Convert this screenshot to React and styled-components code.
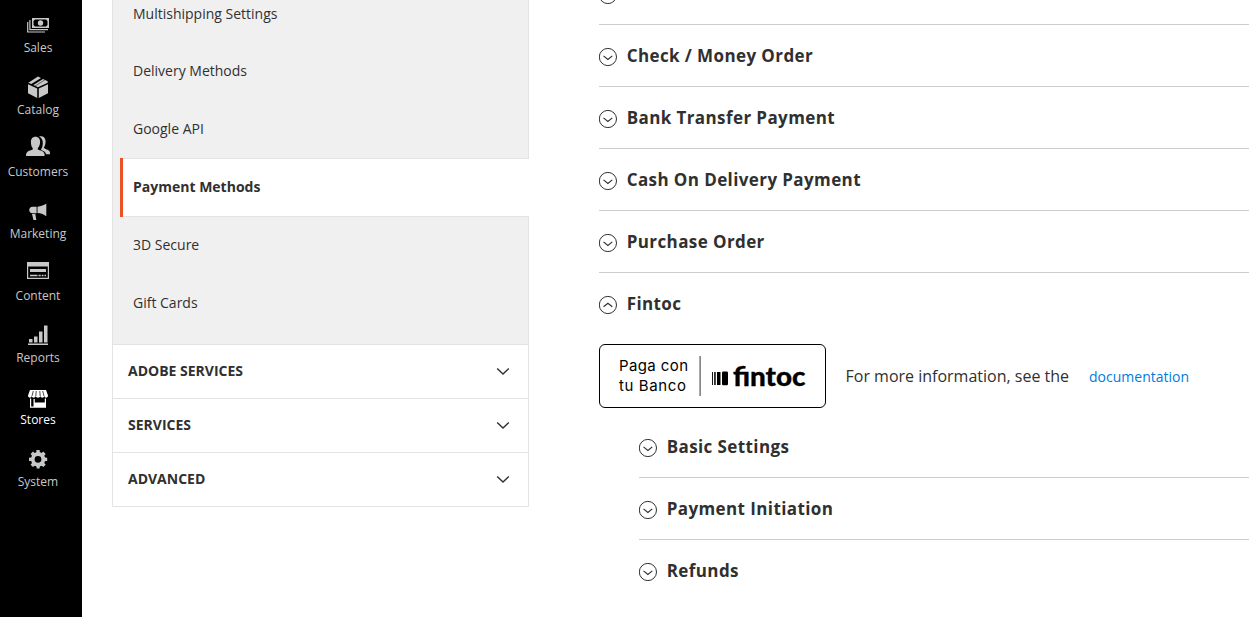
import React from 'react';
import styled, { createGlobalStyle } from 'styled-components';

const GlobalStyle = createGlobalStyle`
  * { box-sizing: border-box; }
  html, body { margin: 0; height: 100%; overflow: hidden; background: #fff; }
  body { font-family: 'Open Sans', 'Noto Sans', sans-serif; color: #303030; font-size: 14px; }
`;

const Page = styled.div`
  display: flex;
  height: 617px;
  overflow: hidden;
`;

const Sidebar = styled.nav`
  flex: 0 0 82px;
  background: #000;
  padding: 11px 6px 0 0;
`;

const MenuItem = styled.a`
  display: flex;
  flex-direction: column;
  align-items: center;
  height: 62px;
  color: ${(p) => (p.$active ? '#fff' : '#c8c8c8')};
  font-size: 12px;
  line-height: 18px;
  svg { display: block; flex: none; }
`;

const ConfigColumn = styled.aside`
  flex: 0 0 417px;
  margin-left: 30px;
`;

const SubNav = styled.ul`
  list-style: none;
  margin: 0;
  padding: 0 0 12px;
  height: 345px;
  display: flex;
  flex-direction: column;
  justify-content: flex-end;
  background: #f0f0f0;
  border: solid #e3e3e3;
  border-width: 0 1px 1px;
`;

const SubNavItem = styled.li`
  flex: none;
  height: ${(p) => (p.$active ? 59 : 58)}px;
  line-height: 20px;
  padding: ${(p) => (p.$active ? '19px 10px' : '19px 20px')};
  &:first-child { padding-top: 20px; }
  ${(p) => p.$active && `
    margin: 0 -1px -1px 7px;
    background: #fff;
    border-left: 3px solid #eb5224;
    box-shadow: inset 0 1px #e3e3e3, inset 0 -1px #e3e3e3;
    font-weight: 700;
  `}
`;

const Section = styled.div`
  display: flex;
  align-items: center;
  justify-content: space-between;
  height: 54px;
  padding: 0 18px 2px 15px;
  border: solid #e3e3e3;
  border-width: 0 1px 1px;
  font-weight: 700;
  text-transform: uppercase;
  svg { margin-top: 1px; }
`;

const Content = styled.main`
  flex: 1;
  min-width: 0;
  margin-left: 70px;
`;

const Group = styled.div`
  display: flex;
  align-items: flex-start;
  height: 62px;
  padding-top: 18px;
  border-bottom: 1px solid ${(p) => (p.$plain ? 'transparent' : '#ccc')};
  &:first-child { height: 25px; padding: 0; align-items: flex-start; }
  &:first-child svg { margin-top: -15px; }
  svg { flex: none; margin: 4px 8.7px 0 0; }
`;

const GroupTitle = styled.h2`
  margin: 1px 0 0;
  font-size: 17px;
  line-height: 24px;
  font-weight: 700;
  letter-spacing: 0.4px;
  white-space: nowrap;
`;

const Nested = styled.div`
  margin-left: 40px;
  padding-top: 8px;
  & > div:first-child { height: 62px; padding-top: 18px; }
  & > div:first-child svg { margin-top: 4px; }
`;

const Notice = styled.div`
  display: flex;
  align-items: center;
  height: 64px;
  margin-top: 9px;
  font-size: 16px;
  white-space: nowrap;
`;

const Banner = styled.div`
  display: flex;
  align-items: center;
  flex: 0 0 226.5px;
  height: 64px;
  margin-right: 20px;
  border: 1px solid #000;
  border-radius: 6px;
  svg { display: block; }
`;

const DocLink = styled.a`
  margin-left: 20px;
  color: #007bdb;
  font-size: 14px;
`;

const icons = {
  Sales: (
    <>
      <path fillRule="evenodd" d="M8 7h17v10H8zM11 8.500 9.500 10v4L11 15.500h11l1.500-1.500v-4L22 8.500z" />
      <circle cx="16.500" cy="12" r="2.700" />
      <path d="M5.900 9v9.600H24M3.700 11v10H21" fill="none" stroke="currentColor" strokeWidth="1.200" />
    </>
  ),
  Catalog: (
    <>
      <path d="M4 11.300 13.200 15.600V25L4 20.200zM24 11.300 14.800 15.600V25L24 20.200z" />
      <path d="M4.300 9.700 14 3.600l3 1.300-9.700 6.200zM9.400 12 19 5.900l4.700 2.400v1.400L14 14.300z" />
      <path d="m11 13.200 10-6.500" stroke="#000" strokeWidth=".5" />
    </>
  ),
  Customers: (
    <>
      <path d="M11.500 1.800c3 0 4.600 2.200 4.600 5.200 0 2.600-.9 4.800-2.300 6.100v1.500c2.500 1 5.500 1.500 6.400 3.400.4.900.4 2 .4 3H2c0-1 0-2.100.5-3 .9-1.900 3.900-2.400 6.200-3.400v-1.500C7.400 11.800 6.900 9.600 6.900 7c0-3 1.600-5.200 4.600-5.200z" />
      <path d="M15 1.500c4-1.300 6.600 1.200 6.600 5 0 2.600-.8 4.700-1.800 6 .6 1.800 5.100 2 5.900 4.100.3.900.3 1.700.3 2.700h-3.800c-.8-2.500-2.500-3.100-5.300-4.500 1.200-1.900 1.900-4.300 1.900-7.100 0-2.700-1.300-5-3.800-6.200z" />
    </>
  ),
  Marketing: (
    <path d="M22.300 6.600v12.600c-2.500-1.700-5-2.800-8.800-3.100V9.700c3.800-.3 6.300-1.400 8.800-3.100zM12.600 9.700v6.500H8.500c-4.300 0-4.300-6.500 0-6.500zM8 17h3.300l1 6H9.500z" />
  ),
  Content: (
    <>
      <path fillRule="evenodd" d="M3 3h22v17H3zM4.200 7.500v11.300h19.600V7.500z" />
      <path d="M6 10h16v3H6zM6 15.700h7.500v1.600H6zM14.500 15.700h2.200v1.600h-2.200zM17.700 15.700h1.800v1.600h-1.800zM20.500 15.700H22v1.600h-1.500z" />
    </>
  ),
  Reports: (
    <path d="M4 22.500h20V24H4zM5 18h3.500v3.500H5zM10 15.500h3.500v6H10zM15 10.500h3.500v11H15zM20 4.500h3.500v17H20z" />
  ),
  Stores: (
    <>
      <path d="M6 7h16l2 5.500c0 2.600-3.300 2.900-3.700.5-.5 2.200-3.500 2.200-4 0-.5 2.200-4.100 2.200-4.600 0-.5 2.200-3.500 2.200-4 0C7.300 15.400 4 15.100 4 12.500z" />
      <path d="M9.300 8 8 13M12.200 8l-.4 5M15.800 8l.4 5M18.700 8 20 13" stroke="#000" strokeWidth=".7" />
      <path fillRule="evenodd" d="M6 15.500h1.200V23.500H9.500v-7.500h1.300v3.500h10v-4H22V24.700H6z" />
    </>
  ),
  System: (
    <path fillRule="evenodd" d="m12.300 5 .2 2.100-1.800.8-1.700-1.400L6.600 8.900 8 10.700l-.8 1.800-2.200.2v3.200l2.200.2L8 18l-1.400 1.800L9 22.100l1.700-1.400 1.800.8.200 2.100h2.900l.2-2.100 1.800-.8 1.700 1.400 2.400-2.300L20.300 18l.8-1.900 2.100-.2v-3.200l-2.100-.2-.8-1.800 1.400-1.800-2.400-2.400-1.700 1.400-1.800-.8-.2-2.100zM14 10.900a3.400 3.400 0 1 1 0 6.800 3.400 3.400 0 0 1 0-6.800z" />
  ),
};

const MenuIcon = ({ name }) => (
  <svg width="28" height="28" viewBox="0 0 28 28" fill="currentColor">{icons[name]}</svg>
);

const Chevron = () => (
  <svg width="14" height="9" viewBox="0 0 14 9" fill="none" stroke="#303030" strokeWidth="1.400">
    <path d="m1.200 1.500 5.800 5.600 5.800-5.600" />
  </svg>
);

const Toggle = ({ open }) => (
  <svg width="19" height="20" viewBox="0 0 19 20" fill="none" stroke="#303030" strokeWidth="1">
    <circle cx="8.900" cy="10" r="8.600" />
    <path strokeWidth="1.200" d={open ? 'm4.500 11.700 4.400-3.500 4.400 3.500' : 'm4.500 8.900 4.400 3.500 4.400-3.500'} />
  </svg>
);

const FintocLogo = () => (
  <svg width="224" height="62" viewBox="0 0 224 62" fill="#000">
    <g fontFamily="Inter, sans-serif" fontSize="15">
      <text x="19" y="26" textLength="69">Paga con</text>
      <text x="19" y="46" textLength="67">tu Banco</text>
    </g>
    <path fill="#555" d="M99.500 11h1.200v40h-1.200z" />
    <path d="M112 27h.9v13H112zM114.200 27h1.500v13h-1.500zM117 27h3.500v13H117z" />
    <rect x="122" y="26.600" width="6" height="13.600" rx="1.300" />
    <text x="133" y="40.500" fontFamily="Lato, sans-serif" fontWeight="900" fontSize="26.500" textLength="72.500" lengthAdjust="spacingAndGlyphs" stroke="#000" strokeWidth=".3">fintoc</text>
  </svg>
);

const GroupRow = ({ title, open, plain }) => (
  <Group $plain={plain}>
    <Toggle open={open} />
    {title && <GroupTitle>{title}</GroupTitle>}
  </Group>
);

const links = ['Multishipping Settings', 'Delivery Methods', 'Google API', 'Payment Methods', '3D Secure', 'Gift Cards'];

export default function App() {
  return (
    <Page>
      <GlobalStyle />
      <Sidebar>
        {Object.keys(icons).map((name) => (
          <MenuItem key={name} $active={name === 'Stores'}>
            <MenuIcon name={name} />
            {name}
          </MenuItem>
        ))}
      </Sidebar>
      <ConfigColumn>
        <SubNav>
          {links.map((l) => <SubNavItem key={l} $active={l === 'Payment Methods'}>{l}</SubNavItem>)}
        </SubNav>
        {['Adobe Services', 'Services', 'Advanced'].map((s) => (
          <Section key={s}>{s}<Chevron /></Section>
        ))}
      </ConfigColumn>
      <Content>
        <GroupRow />
        <GroupRow title="Check / Money Order" />
        <GroupRow title="Bank Transfer Payment" />
        <GroupRow title="Cash On Delivery Payment" />
        <GroupRow title="Purchase Order" />
        <GroupRow title="Fintoc" open plain />
        <Notice>
          <Banner><FintocLogo /></Banner>
          For more information, see the
          <DocLink>documentation</DocLink>
        </Notice>
        <Nested>
          <GroupRow title="Basic Settings" />
          <GroupRow title="Payment Initiation" />
          <GroupRow title="Refunds" plain />
        </Nested>
      </Content>
    </Page>
  );
}
